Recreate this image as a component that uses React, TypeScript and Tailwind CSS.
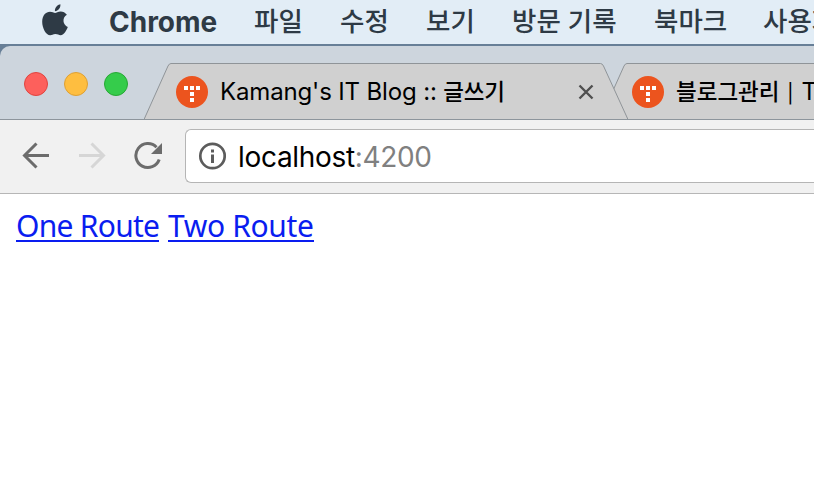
import React from "react";

const menus = [
  { label: "파일", cls: "w-[86px]" },
  { label: "수정", cls: "w-[86px]" },
  { label: "보기", cls: "w-[86px]" },
  { label: "방문 기록", cls: "w-[142px]" },
  { label: "북마크", cls: "w-[109px]" },
  { label: "사용자", cls: "w-[80px]" },
];

function AppleLogo() {
  return (
    <svg className="ml-[42px] mt-[4px] h-[32px] w-[26px] shrink-0" viewBox="0 0 26 32" fill="#2e3a45">
      <path d="M18.4 0.2C18.7 2.5 17.6 4.4 16.3 5.7C15.2 6.8 13.8 7.3 12.9 7.1C12.7 5 13.7 3.2 15 1.9C16 0.9 17.4 0.3 18.4 0.2Z" />
      <path d="M13.1 8.9C14.2 8.9 16 7.5 18.7 7.5C21 7.5 23.4 8.7 24.9 10.8C19.8 13.8 20.7 20.8 25.8 23C25 25.2 22.2 31.2 18.6 31.2C16.7 31.2 15.7 30 13.4 30C11 30 10 31.3 8.2 31.3C4 31.3 0.2 24 0.2 17.7C0.2 11.3 3.9 7.8 8 7.8C10.2 7.8 11.9 8.9 13.1 8.9Z" />
    </svg>
  );
}

function TistoryIcon() {
  return (
    <svg className="h-8 w-8 shrink-0" viewBox="0 0 32 32">
      <circle cx="16" cy="16" r="16" fill="#ec541e" />
      <path d="M8 10h4v4H8zM14 10h4v4h-4zM20 10h4v4h-4zM14 16h4v4h-4zM14 22h4v4h-4z" fill="#fff" />
    </svg>
  );
}

export default function App() {
  return (
    <div className="h-[488px] w-[814px] overflow-hidden bg-white font-['Inter','Noto_Sans_CJK_KR',sans-serif] text-black">
      <div className="flex h-[46px] items-start overflow-hidden border-b-2 border-[#677f97] bg-[#e2edf6] text-[#2e3a45]">
        <AppleLogo />
        <span className="ml-[41px] w-[145px] shrink-0 text-[28px] leading-[44px] font-bold">Chrome</span>
        {menus.map((m) => (
          <span key={m.label} className={`shrink-0 whitespace-nowrap text-[26.5px] leading-[43px] font-medium ${m.cls}`}>
            {m.label}
          </span>
        ))}
      </div>

      <div className="bg-[#677f97]">
        <div className="flex h-[74px] items-end rounded-tl-[10px] border-b border-[#8d959c] bg-[#cdd5dd]">
          <div className="mb-[23px] ml-6 flex w-[120px] shrink-0 gap-4">
            <span className="h-6 w-6 rounded-full border border-[#e0443f] bg-[#fd605c]" />
            <span className="h-6 w-6 rounded-full border border-[#dea034] bg-[#febe40]" />
            <span className="h-6 w-6 rounded-full border border-[#27a835] bg-[#35cc4b]" />
          </div>
          <div className="relative z-10 flex h-[56px] w-[484px] shrink-0 items-center">
            <svg className="absolute inset-0 h-full w-full" viewBox="0 0 484 56">
              <path d="M0 56.5L24 3Q25.2.5 27 .5H456.500Q458.300.5 459.500 3L484 56.500Z" fill="#d0d0d0" stroke="#8f9498" />
            </svg>
            <div className="relative ml-8 flex items-center pt-[2px]">
              <TistoryIcon />
              <span className="ml-3 w-[358px] whitespace-nowrap text-[24px] leading-8 tracking-[-0.15px]">
                Kamang's IT Blog :: <span className="text-[22.5px] font-medium">글쓰기</span>
              </span>
              <svg className="h-4 w-4" viewBox="0 0 16 16" stroke="#505050" strokeWidth="2.4">
                <path d="M1.500 1.500L14.500 14.500M14.500 1.500L1.500 14.500" />
              </svg>
            </div>
          </div>
          <div className="relative -ml-[28px] flex h-[56px] w-[214px] shrink-0 items-center overflow-hidden">
            <svg className="absolute inset-0 h-full w-full" viewBox="0 0 214 56">
              <path d="M0 56.500L24 3Q25.200.5 27 .5H220V56.500Z" fill="#d0d0d0" stroke="#8f9498" />
            </svg>
            <div className="relative ml-8 flex items-center pt-[2px]">
              <TistoryIcon />
              <span className="ml-3 flex items-center whitespace-nowrap text-[22.5px] leading-8 font-medium">
                블로그관리
                <span className="mb-[3px] ml-[8px] w-[14px] font-['Noto_Sans_CJK_KR',sans-serif] text-[20px] leading-8">|</span>
                <span className="text-[24px] font-normal">TISTORY</span>
              </span>
            </div>
          </div>
        </div>
      </div>

      <div className="flex h-[74px] items-center border-b border-[#b6b6b6] bg-[#f1f1f1]">
        <svg className="ml-[22px] mb-[2px] h-7 w-7 shrink-0" viewBox="0 0 28 28" fill="none" stroke="#6c6c6c" strokeWidth="3">
          <path d="M27 13.500H3M14.500 1.500L2.500 13.500L14.500 25.500" />
        </svg>
        <svg className="mb-[2px] ml-[28px] h-7 w-7 shrink-0" viewBox="0 0 28 28" fill="none" stroke="#d6d6d6" strokeWidth="3">
          <path d="M1 13.500H25M13.500 1.500L25.500 13.500L13.500 25.500" />
        </svg>
        <svg className="mb-[1px] ml-[28px] h-7 w-7 shrink-0" viewBox="0 0 28 28">
          <path d="M22.500 5.200A12 12 0 1 0 25.200 17.500" fill="none" stroke="#6c6c6c" strokeWidth="3" />
          <path d="M28 1V12H17Z" fill="#6c6c6c" />
        </svg>
        <div className="mb-[2px] ml-[23px] flex h-[54px] flex-1 items-center overflow-hidden rounded-l-[6px] border border-r-0 border-[#b5b5b5] bg-white">
          <svg className="ml-[12px] h-7 w-7 shrink-0" viewBox="0 0 28 28" fill="none" stroke="#5c5c5c">
            <circle cx="14.500" cy="14" r="12.200" strokeWidth="2.700" />
            <path d="M14.500 12.500V21M14.500 7.500V10.500" strokeWidth="3" />
          </svg>
          <span className="ml-[12px] whitespace-nowrap pt-[2px] text-[28px] leading-[40px] tracking-[-0.32px]">
            localhost<span className="text-[#808080]">:4200</span>
          </span>
        </div>
      </div>

      <div className="flex gap-[9px] pt-[12px] pl-4 font-['Noto_Sans','Noto_Sans_CJK_KR',sans-serif] text-[30px] text-[#0a1df0]">
        <a className="h-[36px] w-[143px] whitespace-nowrap border-b-2 border-[#0a1df0] leading-[40px] tracking-[-0.72px]">One Route</a>
        <a className="h-[36px] w-[146px] whitespace-nowrap border-b-2 border-[#0a1df0] leading-[40px] tracking-[-0.35px]">Two Route</a>
      </div>
    </div>
  );
}
